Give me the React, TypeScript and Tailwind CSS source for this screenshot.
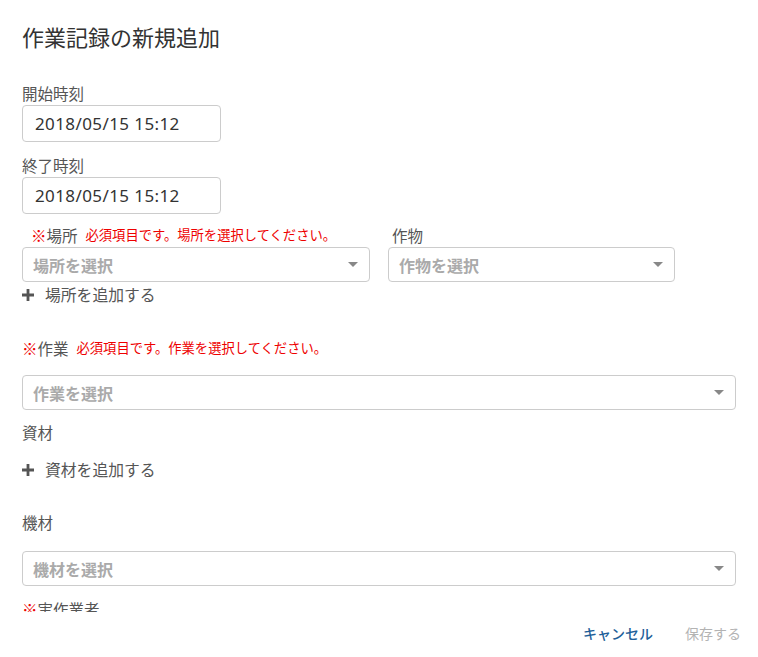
const FONT = { fontFamily: '"Noto Sans CJK JP", "Noto Sans", sans-serif' };

function Caret() {
  return (
    <svg width="10" height="6" viewBox="0 0 10 6" className="shrink-0">
      <path d="M0 0h10L5 5z" fill="#888" />
    </svg>
  );
}

function Plus() {
  return (
    <svg width="12" height="12" viewBox="0 0 12 12" className="shrink-0">
      <path d="M4.6 0h2.8v4.6H12v2.8H7.4V12H4.6V7.4H0V4.6h4.6z" fill="#555" />
    </svg>
  );
}

function Select({ placeholder, className }: { placeholder: string; className?: string }) {
  return (
    <div
      className={`flex h-[35px] items-center justify-between rounded border border-[#ccc] bg-white pl-[10px] pr-[11px] ${className ?? ""}`}
    >
      <span className="text-[16px] font-bold leading-none text-[#aaa]">{placeholder}</span>
      <Caret />
    </div>
  );
}

function DateInput({ value }: { value: string }) {
  return (
    <div
      className="flex h-[37px] w-[199px] items-center rounded border border-[#ccc] pl-[12px] text-[17px] tracking-[0.4px] text-[#333]"
      style={{ fontFamily: '"Noto Sans", sans-serif' }}
    >
      {value}
    </div>
  );
}

function Label({ children, className }: { children: React.ReactNode; className?: string }) {
  return <div className={`text-[15.5px] leading-[22px] text-[#555] ${className ?? ""}`}>{children}</div>;
}

function Required({ label, error, className }: { label: string; error: string; className?: string }) {
  return (
    <div className={`flex items-center leading-[22px] ${className ?? ""}`}>
      <span className="text-[15.5px] text-[#e00]">※</span>
      <span className="text-[15.5px] text-[#555]">{label}</span>
      <span className="ml-[8px] text-[13.3px] text-[#e00]">{error}</span>
    </div>
  );
}

function AddLink({ children, className }: { children: React.ReactNode; className?: string }) {
  return (
    <div className={`flex items-center gap-[11px] leading-[22px] ${className ?? ""}`}>
      <Plus />
      <span className="text-[15.8px] text-[#555]">{children}</span>
    </div>
  );
}

export default function App() {
  return (
    <div className="flex h-[657px] w-[758px] flex-col bg-white" style={FONT}>
      <div className="h-[612px] overflow-hidden px-[22px]">
        <h1 className="pt-[20px] text-[22px] leading-[32px] text-[#333]">作業記録の新規追加</h1>

        <Label className="mt-[30px]">開始時刻</Label>
        <div className="mt-[1px]">
          <DateInput value="2018/05/15 15:12" />
        </div>

        <Label className="mt-[12px]">終了時刻</Label>
        <div className="mt-[1px]">
          <DateInput value="2018/05/15 15:12" />
        </div>

        <div className="mt-[10px] flex gap-[18px]">
          <div className="w-[348px]">
            <Required className="pl-[9px]" label="場所" error="必須項目です。場所を選択してください。" />
            <Select className="mt-[1px]" placeholder="場所を選択" />
          </div>
          <div className="w-[287px]">
            <Label className="pl-[4px]">作物</Label>
            <Select className="mt-[1px]" placeholder="作物を選択" />
          </div>
        </div>

        <AddLink className="mt-[2px]">場所を追加する</AddLink>

        <Required className="mt-[31px]" label="作業" error="必須項目です。作業を選択してください。" />
        <Select className="mt-[16px] w-[714px]" placeholder="作業を選択" />

        <Label className="mt-[11px]">資材</Label>
        <AddLink className="mt-[16px]">資材を追加する</AddLink>

        <Label className="mt-[30px]">機材</Label>
        <Select className="mt-[18px] w-[714px]" placeholder="機材を選択" />

        <div className="mt-[12px] flex leading-[22px]">
          <span className="text-[15.5px] text-[#e00]">※</span>
          <span className="text-[15.5px] text-[#555]">実作業者</span>
        </div>
      </div>

      <div className="flex h-[45px] items-center justify-end gap-[32px] pr-[17px] pb-[2px]">
        <button className="text-[14px] font-medium text-[#1f5f99]">キャンセル</button>
        <button className="text-[14px] text-[#b3b3b3]">保存する</button>
      </div>
    </div>
  );
}
